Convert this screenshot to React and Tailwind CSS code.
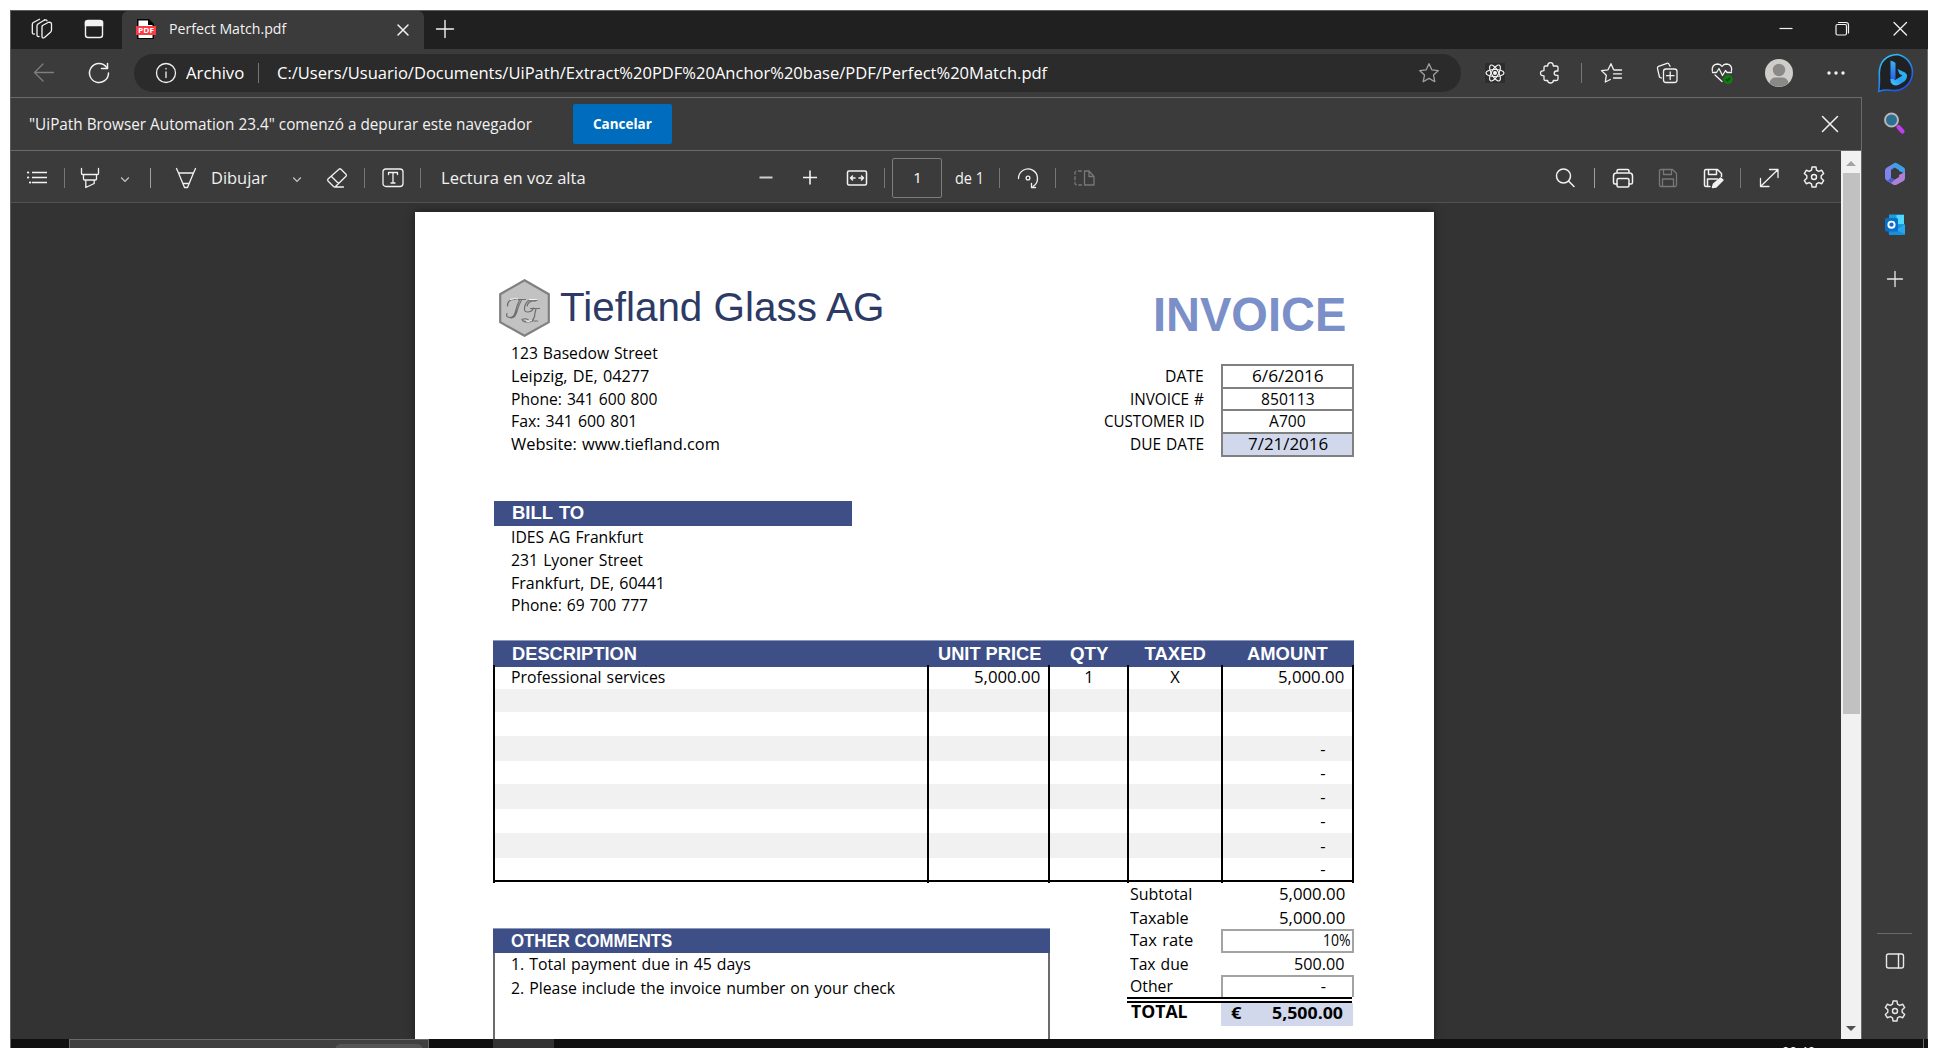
import React, { useLayoutEffect, useRef, useState } from "react";

/* Text scaled horizontally so that it occupies exactly `w` pixels. */
function Fit({ w, className = "", children }) {
  const ref = useRef(null);
  const [k, setK] = useState(1);
  useLayoutEffect(() => {
    setK(w / ref.current.offsetWidth);
  }, [w]);
  return (
    <span className={"block shrink-0 whitespace-nowrap " + className} style={{ width: w }}>
      <span ref={ref} className="inline-block origin-left" style={{ transform: `scaleX(${k})` }}>
        {children}
      </span>
    </span>
  );
}

function Ico({ className = "", children, sw = 1.3 }) {
  return (
    <svg
      viewBox="0 0 24 24"
      className={"h-6 w-6 shrink-0 " + className}
      fill="none"
      stroke="currentColor"
      strokeWidth={sw}
      strokeLinecap="round"
      strokeLinejoin="round"
    >
      {children}
    </svg>
  );
}

const Sep = ({ className = "" }) => <div className={"h-5 w-px shrink-0 bg-[#767676] " + className} />;

const Chevron = ({ className }) => (
  <svg viewBox="0 0 12 12" className={"h-3 w-3 shrink-0 " + className} fill="none" stroke="#c8c8c8" strokeWidth="1.2">
    <path d="M2.200 5.500 L6 9.500 L9.800 5.500" />
  </svg>
);

const Gear = ({ className }) => (
  <Ico className={className} sw={1.25}>
    <g transform="translate(12 12) scale(1.14) translate(-12 -11)">
      <path d="M10.300 2.200h3.400l.500 2.800 1.900 1.100 2.700-1 1.700 2.900-2.200 1.900v2.200l2.200 1.900-1.700 2.900-2.700-1-1.900 1.100-.500 2.800h-3.400l-.500-2.800-1.900-1.100-2.700 1-1.700-2.900 2.200-1.900V9.900l-2.200-1.900 1.700-2.900 2.700 1 1.900-1.100z" />
      <circle cx="12" cy="11" r="2.200" />
    </g>
  </Ico>
);

function TabStrip() {
  return (
    <div className="flex h-[38px] shrink-0 bg-[#202020] text-[#f2f2f2]">
      <Ico className="ml-[19px] mt-[6px]" sw={1.3}>
        <path d="M12.500 8.500L18.500 5.300Q21.500 5 21.500 7v6q0 1.500-1 2.200L14.500 20.500q-2.500 1.300-2.500-1V10q0-1 .500-1.500z" />
        <path d="M9 19.500q-2 .300-2-1.500V9q0-1.300 1-2l6.500-4" />
        <path d="M4.300 17q-2 .300-2-1.500V7.500q0-1.300 1-2L9.500 2.200M14.500 3q2-.500 2.500.800" />
      </Ico>
      <Ico className="ml-[28px] mt-[6px]" sw={1.4}>
        <rect x="3.500" y="3.500" width="17" height="17" rx="2.500" />
        <path d="M3.500 4.500h17v4h-17z" fill="currentColor" />
      </Ico>
      <div className="ml-[16px] flex h-[38px] w-[302px] rounded-t-[6px] bg-[#3b3b3b]">
        <svg viewBox="0 0 20 20" className="ml-[14px] mt-[8px] h-5 w-5 shrink-0">
          <path d="M1 0h12l5 5v15H1z" fill="#050505" />
          <path d="M2.500 1.500h9.500V6h4.500v13h-14z" fill="#fff" />
          <path d="M0 7h20v9H0z" fill="#fb3b41" />
          <text x="10" y="14" textAnchor="middle" fontSize="6.800" fontWeight="700" fill="#fff" fontFamily="Open Sans, sans-serif" textLength="16" lengthAdjust="spacingAndGlyphs">PDF</text>
        </svg>
        <Fit w={117} className="ml-[13px] text-[14.5px] leading-[36px]">Perfect Match.pdf</Fit>
        <Ico className="ml-[105px] mt-[7px]" sw={1.5}>
          <path d="M7 7l10 10M17 7L7 17" />
        </Ico>
      </div>
      <Ico className="ml-[9px] mt-[6px]" sw={1.4}>
        <path d="M12 3.500v17M3.500 12h17" />
      </Ico>
      <Ico className="ml-[1317px] mt-[6px]" sw={1.2}>
        <path d="M5.500 11.500h13" strokeLinecap="butt" />
      </Ico>
      <Ico className="ml-[32px] mt-[6px]" sw={1.2}>
        <rect x="6" y="7.500" width="10.500" height="10.500" rx="1.500" />
        <path d="M8.500 5.500H16q2.500 0 2.500 2.500v8" />
      </Ico>
      <Ico className="ml-[34px] mt-[6px]" sw={1.3}>
        <path d="M6 5.500l12.500 12.500M18.500 5.500L6 18" />
      </Ico>
    </div>
  );
}

function NavBar() {
  return (
    <div className="flex h-12 shrink-0 items-center bg-[#3b3b3b] text-[#f2f2f2]">
      <Ico className="ml-[21px] text-[#7e7e7e]">
        <path d="M21.500 11.500H2.500M11 3L2.500 11.500 11 20" />
      </Ico>
      <Ico className="ml-[31px]" sw={1.5}>
        <path d="M21.500 12A9.500 9.500 0 1 1 19.500 6.200" />
        <path d="M20.500 2.500v5h-6" />
      </Ico>
      <div className="ml-[23px] flex h-[38px] w-[1327px] shrink-0 items-center rounded-full bg-[#2b2b2b]">
        <Ico className="ml-[20px]">
          <circle cx="12" cy="12" r="9.500" />
          <path d="M12 11v5.500M12 7.500v.400" />
        </Ico>
        <Fit w={58} className="ml-[8px] text-[17px] leading-[36px] text-white">Archivo</Fit>
        <Sep className="ml-[14px] bg-[#8a8a8a]" />
        <Fit w={770} className="ml-[18px] text-[17px] leading-[36px] text-white">
          C:/Users/Usuario/Documents/UiPath/Extract%20PDF%20Anchor%20base/PDF/Perfect%20Match.pdf
        </Fit>
        <Ico className="ml-auto mr-[20px] text-[#a0a0a0]">
          <path d="M12 2.700l2.800 6.100 6.600.800-4.900 4.500 1.300 6.600L12 17.400l-5.800 3.300 1.300-6.600-4.900-4.500 6.600-.800z" />
        </Ico>
      </div>
      <Ico className="ml-[22px]" sw={1.2}>
        <rect x="2" y="2" width="20" height="20" fill="#2d2d2d" stroke="none" />
        <ellipse cx="12" cy="12" rx="9" ry="3.500" />
        <ellipse cx="12" cy="12" rx="9" ry="3.500" transform="rotate(60 12 12)" />
        <ellipse cx="12" cy="12" rx="9" ry="3.500" transform="rotate(120 12 12)" />
        <circle cx="12" cy="12" r="1.400" fill="currentColor" />
      </Ico>
      <Ico className="ml-[31px]">
        <path d="M7.500 5h2.200q0-3.300 2.800-3.300T15.300 5h3.200q1.500 0 1.500 1.500V10h-1.500q-2.300.200-2.300 2.200t2.300 2.200H20v3.600q0 1.500-1.500 1.500h-3.200q0 2.500-2.800 2.500t-2.800-2.500H7.500Q6 19.500 6 18v-3.200q-3.500 0-3.500-2.600T6 9.600V6.500Q6 5 7.500 5z" />
      </Ico>
      <Sep className="ml-[19px]" />
      <Ico className="ml-[17px]">
        <path d="M14.500 8.500L12 2.700 9 8.800l-6.500.800 4.800 4.700-1 6.700 5-2.500M15 9h7.500M14.500 12.800h8M14.500 17h8" />
      </Ico>
      <Ico className="ml-[32px]">
        <path d="M6.500 17l-2-.800-2-8.700Q2.200 5.800 3.500 5.300l8.500-3q1.500-.400 2 1l1 2" />
        <rect x="8.500" y="8" width="13.500" height="13.500" rx="2.500" />
        <path d="M15.200 11v7.500M11.500 14.700h7.500" />
      </Ico>
      <Ico className="ml-[31px]">
        <path d="M2.300 10Q1.500 3.500 7.500 3q3 0 4.500 2.500Q13.500 3 16.500 3q6 .500 5 7M5 14l7 6.500M2.500 11.500h4l2.500-4 3.500 7 3-5 1.500 2h4.500" />
        <circle cx="18" cy="18.500" r="4.700" fill="#107c10" stroke="none" />
        <path d="M16.300 18.500l1.200 1.300 2.200-2.500" stroke="#0b3d0b" />
      </Ico>
      <svg viewBox="0 0 28 28" className="ml-[31px] h-7 w-7 shrink-0">
        <circle cx="14" cy="14" r="14" fill="#cfcdca" />
        <circle cx="14" cy="11" r="6.200" fill="#8b8987" />
        <path d="M4.500 24q1-5.500 6.500-5.500h6q5.500 0 6.500 5.500A14 14 0 0 1 4.500 24z" fill="#8b8987" />
      </svg>
      <Ico className="ml-[31px]">
        <g fill="currentColor" stroke="none">
          <circle cx="5" cy="12" r="1.700" />
          <circle cx="12" cy="12" r="1.700" />
          <circle cx="19" cy="12" r="1.700" />
        </g>
      </Ico>
    </div>
  );
}

function InfoBar() {
  return (
    <div className="flex h-[54px] shrink-0 items-center border-y border-[#6a6a6a] bg-[#3b3b3b] text-[#f2f2f2]">
      <Fit w={503} className="-mt-px ml-[18px] text-[15.5px] leading-[44px]">"UiPath Browser Automation 23.4" comenzó a depurar este navegador</Fit>
      <div className="ml-[41px] flex h-10 w-[99px] items-center justify-center rounded-[2px] bg-[#006cbe] text-white">
        <Fit w={58.5} className="text-[14.5px] font-bold">Cancelar</Fit>
      </div>
      <Ico className="ml-auto mr-[19px]" sw={1.5}>
        <path d="M4.500 4.500l15 15M19.500 4.500l-15 15" />
      </Ico>
    </div>
  );
}

function PdfToolbar() {
  return (
    <div className="flex h-[52px] shrink-0 items-center border-b border-[#525252] bg-[#3b3b3b] pt-[2px] text-[#f2f2f2]">
      <Ico className="ml-[14px]">
        <path d="M7 6.500h15M7 11.500h15M7 16.500h15" strokeLinecap="butt" />
        <path d="M3 6.500h.200M3 11.500h.200M5 16.500h.200" strokeWidth="2.200" />
      </Ico>
      <Sep className="ml-[15px]" />
      <Ico className="ml-[13px]">
        <path d="M3.500 2.500v5q0 1 1 1h15q1 0 1-1v-5M5.500 8.500v4.500q0 1 1 1h11q1 0 1-1V8.500M7.800 14v7.500l8.400-4V14" />
      </Ico>
      <Chevron className="ml-[17px]" />
      <Sep className="ml-[19px] bg-[#a0a0a0]" />
      <Ico className="ml-[23px]">
        <path d="M2.500 2.500L4.500 7h15l2-4.500M4.500 7l6 14.500h3L19.500 7M9 17.500h6" />
      </Ico>
      <Fit w={56} className="ml-[13px] text-[17px] leading-[50px]">Dibujar</Fit>
      <Chevron className="ml-[24px]" />
      <Ico className="ml-[22px]">
        <path d="M14 3.200q1-.900 2 0l5 5q.900 1 0 2L10.500 20.500q-1 .800-2 0l-5.500-5.500q-.800-1 0-2zM6.500 10.500l7 7M9.500 21h9" />
      </Ico>
      <Sep className="ml-[15px]" />
      <Ico className="ml-[16px]">
        <rect x="2" y="3" width="20" height="17.500" rx="3" />
        <path d="M7.500 8.500V6.500h9v2M12 6.500V17M10 17h4" />
      </Ico>
      <Sep className="ml-[15px]" />
      <Fit w={145} className="ml-[20px] text-[17px] leading-[50px]">Lectura en voz alta</Fit>
      <Ico className="ml-[168px] text-[#d0d0d0]" sw={2}>
        <path d="M5.500 11.500h13" strokeLinecap="butt" />
      </Ico>
      <Ico className="ml-[20px]" sw={1.6}>
        <path d="M5 11.500h14M12 4.500v14" strokeLinecap="butt" />
      </Ico>
      <Ico className="ml-[23px]" sw={1.5}>
        <rect x="2.500" y="5" width="19" height="14" rx="1.500" />
        <path d="M5.500 12h4.500M7.500 10l-2 2 2 2M18.500 12H14M16.500 10l2 2-2 2" />
      </Ico>
      <Sep className="ml-[15px]" />
      <div className="ml-[7px] flex h-10 w-[50px] shrink-0 items-center justify-center rounded-[2px] border border-[#7d7d7d] pl-px text-[15px] text-white">1</div>
      <Fit w={29} className="ml-[13px] text-[15.5px] leading-[50px]">de 1</Fit>
      <Sep className="ml-[15px]" />
      <Ico className="ml-[16px]">
        <path d="M2.500 12.500a9.500 9.500 0 1 1 14.500 8" />
        <path d="M19.500 21.500h-4v-4" />
        <circle cx="12" cy="12" r="1.900" />
      </Ico>
      <Sep className="ml-[15px]" />
      <Ico className="ml-[16px] text-[#787878]">
        <path d="M12.500 5h4.500l5 5.500V19h-9.500zM17 5v5.500h5" />
        <path d="M9.500 5H5Q3 5 3 7v10q0 2 2 2h4.500" strokeDasharray="3 2.500" />
      </Ico>
      <Ico className="ml-[457px]" sw={1.5}>
        <circle cx="10.500" cy="10" r="7" />
        <path d="M15.500 15l5.500 5.500" />
      </Ico>
      <Sep className="ml-[17px] bg-[#a0a0a0]" />
      <Ico className="ml-[16px]" sw={1.5}>
        <path d="M6 7V5q0-1.500 1.500-1.500h9Q18 3.500 18 5v2M6 18H4q-1.500 0-1.500-1.500V10Q2.500 7 5.500 7h13q3 0 3 3v6.500Q21.500 18 20 18h-2" />
        <rect x="6" y="12.500" width="12" height="8.500" rx="1.500" />
      </Ico>
      <Ico className="ml-[21px] text-[#787878]">
        <path d="M5 3.500h11.500l4 4V19q0 1.500-1.500 1.500H5q-1.500 0-1.500-1.500V5Q3.500 3.500 5 3.500zM7.500 3.500v5h8v-5M6.500 20.500v-7.500h11v7.500" />
      </Ico>
      <Ico className="ml-[21px]" sw={1.5}>
        <path d="M9 20.500H5q-1.500 0-1.500-1.500V5Q3.500 3.500 5 3.500h11.500l4 4v3M7.500 3.500v5h8v-5M6.500 20.500v-7.500h10" />
        <path d="M11.500 21.500l1-3.500 7-6 2.500 2-7 7z" fill="currentColor" />
      </Ico>
      <Sep className="ml-[15px]" />
      <Ico className="ml-[16px]">
        <path d="M3.500 20.500L21 3.500M12.500 3.500H21v8M3.500 12.500v8H12" />
      </Ico>
      <Gear className="-mt-[2px] ml-[21px]" />
    </div>
  );
}

function Sidebar() {
  return (
    <div className="flex w-[66px] shrink-0 flex-col items-center border-r border-[#6a6a6a] bg-[#3b3b3b] text-[#e8e8e8]">
      <svg viewBox="0 0 40 40" className="ml-[4px] mt-[4px] h-10 w-10 shrink-0">
        <defs>
          <linearGradient id="ring" x1="0" y1="0" x2="0.6" y2="1">
            <stop offset="0" stopColor="#35d0f5" />
            <stop offset="1" stopColor="#1b55e8" />
          </linearGradient>
          <linearGradient id="stem" x1="0" y1="0" x2="0" y2="1">
            <stop offset="0" stopColor="#3bb4f8" />
            <stop offset="1" stopColor="#1f4fe8" />
          </linearGradient>
          <linearGradient id="bowl" x1="1" y1="0" x2="0" y2="1">
            <stop offset="0" stopColor="#27c4f5" />
            <stop offset="0.55" stopColor="#2aa0f0" />
            <stop offset="1" stopColor="#4bc8ff" />
          </linearGradient>
        </defs>
        <path d="M20.500 1.500A18 18 0 1 1 14 37.300Q7 36.500 1.700 38.500q1-7 .600-18.500Q3 2.500 20.500 1.500z" fill="#202124" stroke="url(#ring)" strokeWidth="1.600" />
        <path d="M13.500 7.500q4 1 5 2.500v16l-5 4z" fill="url(#stem)" />
        <path d="M13.500 26q0 6.500 5.500 6.500 2 0 5-2l3.500-2.300q5-5.200.500-8.700L20.500 16l2 5 3 1.500L18 27q-1 .500-1-1z" fill="url(#bowl)" />
      </svg>
      <Ico className="ml-[-1px] mt-[18px]">
        <path d="M16.500 16l4 4.500" stroke="#c13df5" strokeWidth="4.200" />
        <circle cx="9.500" cy="9" r="6.500" fill="#2b6f94" stroke="#b9b6b3" strokeWidth="2" />
      </Ico>
      <svg viewBox="0 0 24 24" className="ml-[1px] mt-[27px] h-6 w-6 shrink-0">
        <path d="M11.500 1L4 5.500Q2 6.500 2 8.500v7q0 2 1.500 3L8 20.500V8.500q0-2 1.500-3l5-3z" fill="#7d84ec" />
        <path d="M11.500 1q1-.500 2.500.200l6.500 4Q22 6 22 8v3.500L16 9V8l-4.500-2.500L8 8l1-4.500z" fill="#3f9fe8" />
        <path d="M22 10v6q0 2-1.500 3l-6.500 3.500q-2 1-4 0L4 19l2-1 6-.500L16 15v-2z" fill="#b07fd8" />
        <path d="M8 8v7.500l4 2.300-4 3.200-4.500-2.500Q7 18 8 15z" fill="#4b5fc8" />
        <path d="M12 7.700l3.700 2.200v4.200L12 16.300l-3.700-2.200V9.900z" fill="#3b3b3b" />
      </svg>
      <svg viewBox="0 0 24 24" className="ml-[1px] mt-[27px] h-6 w-6 shrink-0">
        <path d="M6 1.500h15V16H6z" fill="#1b9de2" />
        <path d="M13.500 2h7.500v9h-7.500z" fill="#50d9ff" />
        <path d="M5 13l17-1v9q0 1-1 1H6z" fill="#1490df" />
        <path d="M13 17l9-6v10z" fill="#28a8ea" />
        <rect x="2" y="5" width="13" height="13.500" rx="1.500" fill="#0a6fc8" />
        <circle cx="8.500" cy="11.700" r="3.100" fill="none" stroke="#fff" strokeWidth="1.900" />
      </svg>
      <Ico className="mt-[30px]">
        <path d="M12 4.500v15M4.500 12h15" />
      </Ico>
      <div className="mt-auto h-px w-[35px] bg-[#6a6a6a]" />
      <Ico className="mt-[15px]" sw={1.4}>
        <rect x="3.500" y="5" width="17" height="14" rx="2" />
        <path d="M15.500 5v14" />
      </Ico>
      <Gear className="mb-[16px] mt-[26px]" />
    </div>
  );
}

function Scrollbar() {
  return (
    <div className="flex w-5 shrink-0 flex-col items-center bg-[#f1f1f1]">
      <div className="mt-[10px] h-0 w-0 border-x-[5px] border-b-[5px] border-x-transparent border-b-[#a3a3a3]" />
      <div className="mt-[7px] h-[541px] w-[17px] bg-[#c1c1c1]" />
      <div className="mb-[8px] mt-auto h-0 w-0 border-x-[5px] border-t-[5px] border-x-transparent border-t-[#505050]" />
    </div>
  );
}

const address = [
  ["123 Basedow Street", 147],
  ["Leipzig, DE, 04277", 138],
  ["Phone: 341 600 800", 146],
  ["Fax: 341 600 801", 126],
  ["Website: www.tiefland.com", 209],
];

const meta = [
  ["DATE", 39, "6/6/2016", 72],
  ["INVOICE #", 74, "850113", 54],
  ["CUSTOMER ID", 100, "A700", 37],
  ["DUE DATE", 74, "7/21/2016", 80],
];

const billTo = [
  ["IDES AG Frankfurt", 132],
  ["231 Lyoner Street", 132],
  ["Frankfurt, DE, 60441", 154],
  ["Phone: 69 700 777", 137],
];

const rows = [
  "h-[22px] bg-white",
  "h-[23px] bg-[#f1f1f1]",
  "h-[24px] bg-white",
  "h-[25px] bg-[#f1f1f1]",
  "h-[23px] bg-white",
  "h-[25px] bg-[#f1f1f1]",
  "h-[24px] bg-white",
  "h-[25px] bg-[#f1f1f1]",
  "h-[22px] bg-white",
];

function Row({ className, cells = [] }) {
  return (
    <div className={"grid grid-cols-[434px_121px_79px_94px_133px] " + className}>
      <div className="flex items-center border-l-2 border-black pl-[16px]">{cells[0]}</div>
      <div className="flex items-center justify-end border-l-2 border-black pr-[8px]">{cells[1]}</div>
      <div className="flex items-center justify-center border-l-2 border-black">{cells[2]}</div>
      <div className="flex items-center justify-center border-l-2 border-black">{cells[3]}</div>
      <div className="flex items-center justify-end border-x-2 border-black pr-[8px]">{cells[4]}</div>
    </div>
  );
}

const Dash = () => <span className="mr-[18px] leading-[20px]">-</span>;

function Invoice() {
  return (
    <div className="ml-[404px] mt-[9px] flex h-[827px] w-[1019px] shrink-0 flex-col bg-white font-['Open_Sans','Noto_Sans',sans-serif] text-[16.5px] text-black shadow-[0_0_8px_rgba(0,0,0,0.5)] [word-spacing:1px]">
      <div className="flex h-[289px] shrink-0">
        <div className="ml-[84px] mt-[67px] w-[600px]">
          <div className="flex h-[58px] items-center">
            <svg viewBox="0 0 51 58" className="h-[58px] w-[51px] shrink-0">
              <path d="M25.500 1.300L49.800 15.200v28L25.500 56.800 1.200 43.200v-28z" fill="#c2c2c2" stroke="#808080" strokeWidth="2.200" />
              <g fill="none" stroke="#6e6e6e" strokeWidth="1.200" strokeLinecap="round">
                <path d="M8.500 27q0-6.500 7-6.500h11M20.500 21q-2.500 5-4 11.500-1.500 6.500-6 6-4-.500-2.500-4M22.500 21q-3 5-4.500 11-1.500 6.500-6 7" />
                <path d="M38 21.500q-9-3-12 5-2 6.500 2.500 6.500t6-4M31.500 29.500h9M37 29.500q-1 4-1.500 8-1.500 5.500-6.500 5.500t-6-2.500q3-1.500 6 0M34 42h4.500M36.500 22q-7-1-8.500 5" />
              </g>
              <path d="M11 20.500q5-1.500 8-.500M30 20.500h8M27 42q3 1.500 6-1" stroke="#f4f4f4" strokeWidth="1" fill="none" />
            </svg>
            <Fit w={324.5} className="-mt-[2px] ml-[10px] font-['Liberation_Sans',Arial,sans-serif] text-[40.5px] leading-[56px] text-[#2d3a66] [word-spacing:0px]">Tiefland Glass AG</Fit>
          </div>
          <div className="ml-[12px] mt-[5px]">
            {address.map(([t, w]) => (
              <Fit key={t} w={w} className="h-[22.75px] leading-[22.6px]">{t}</Fit>
            ))}
          </div>
        </div>
        <div className="flex w-[255px] flex-col items-end pt-[76px]">
          <Fit w={193} className="mr-[8px] font-['Liberation_Sans',Arial,sans-serif] text-[47.5px] font-bold leading-[54px] text-[#7b8fc8]">INVOICE</Fit>
          <div className="mt-[22px] flex">
            <div className="mr-[17px] flex flex-col items-end">
              {meta.map(([t, w]) => (
                <Fit key={t} w={w} className="h-[22.6px] leading-[23px]">{t}</Fit>
              ))}
            </div>
            <div className="w-[133px] border-x-2 border-t-2 border-[#808080]">
              {meta.map(([, , t, w]) => (
                <div key={t} className={"flex h-[22.7px] justify-center border-b-2 border-[#808080] " + (t === "7/21/2016" ? "bg-[#d2d8ec]" : "bg-white")}>
                  <Fit w={w} className="h-[20px] leading-[19px]">{t}</Fit>
                </div>
              ))}
            </div>
          </div>
        </div>
      </div>

      <div className="ml-[79px] flex h-[25px] w-[358px] shrink-0 items-center bg-[#3e4f87] font-['Liberation_Sans',Arial,sans-serif] text-[18.5px] font-bold leading-[25px] text-white">
        <Fit w={72} className="-mt-[2px] ml-[18px]">BILL TO</Fit>
      </div>
      <div className="ml-[95.5px] h-[114px] shrink-0 pt-px">
        {billTo.map(([t, w]) => (
          <Fit key={t} w={w} className="h-[22.8px] leading-[20px]">{t}</Fit>
        ))}
      </div>

      <div className="ml-[77.5px] shrink-0">
        <div className="grid h-[25px] w-[861px] grid-cols-[434px_121px_79px_94px_133px] items-center border-t border-[#8d98bb] bg-[#3e4f87] font-['Liberation_Sans',Arial,sans-serif] text-[18.5px] font-bold leading-[25px] text-white [word-spacing:0px]">
          <Fit w={124.5} className="ml-[19px]">DESCRIPTION</Fit>
          <Fit w={103.5} className="ml-[11px]">UNIT PRICE</Fit>
          <Fit w={38.5} className="ml-[22.5px]">QTY</Fit>
          <Fit w={61} className="ml-[18px]">TAXED</Fit>
          <Fit w={80.5} className="ml-[26.5px]">AMOUNT</Fit>
        </div>
        <Row className="h-[2px] w-[861px] bg-[#3e4f87]" />
        {rows.map((c, i) => (
          <Row
            key={i}
            className={"w-[861px] leading-[22px] " + c}
            cells={
              i === 0
                ? [
                    <Fit w={154} className="-mt-[2px]">Professional services</Fit>,
                    <Fit w={66} className="-mt-[2px]">5,000.00</Fit>,
                    <span className="-mt-[2px] pl-[2px]">1</span>,
                    <span className="-mt-[2px] pl-px">X</span>,
                    <Fit w={66} className="-mt-[2px]">5,000.00</Fit>,
                  ]
                : i > 2
                ? [null, null, null, null, <Dash />]
                : []
            }
          />
        ))}
        <div className="h-[2px] w-[861px] bg-black" />
        <Row className="h-px w-[861px]" />
      </div>

      <div className="ml-[77.5px] flex h-[156px] shrink-0">
        <div className="mt-[45px] flex w-[557.5px] shrink-0 flex-col">
          <div className="flex h-[25px] shrink-0 items-center border-t border-[#8d98bb] bg-[#3e4f87] font-['Liberation_Sans',Arial,sans-serif] text-[18.5px] font-bold leading-[24px] text-white [word-spacing:0px]">
            <Fit w={161.5} className="-mt-px ml-[18.5px]">OTHER COMMENTS</Fit>
          </div>
          <div className="h-[86px] border-x-2 border-[#6b6b6b] pl-[16.5px]">
            <Fit w={240} className="h-[24px] leading-[22px]">1. Total payment due in 45 days</Fit>
            <Fit w={384} className="h-[24px] leading-[22px]">2. Please include the invoice number on your check</Fit>
          </div>
        </div>
        <div className="ml-[77px] w-[227px] shrink-0 leading-[20px]">
          <div className="flex h-[21px] items-center">
            <Fit w={62} className="ml-[3px]">Subtotal</Fit>
            <Fit w={66} className="ml-auto mr-[9.5px]">5,000.00</Fit>
          </div>
          <div className="flex h-[25px] items-center pt-[2px]">
            <Fit w={59} className="ml-[3px]">Taxable</Fit>
            <Fit w={66} className="ml-auto mr-[9.5px]">5,000.00</Fit>
          </div>
          <div className="flex h-[24px]">
            <Fit w={63} className="ml-[3px] mt-px">Tax rate</Fit>
            <div className="ml-auto flex h-[24px] w-[133px] justify-end border-2 border-[#a3a3a3] pr-[1px]">
              <Fit w={28} className="-mt-px">10%</Fit>
            </div>
          </div>
          <div className="flex h-[22px] items-center">
            <Fit w={59} className="ml-[3px]">Tax due</Fit>
            <Fit w={51} className="ml-auto mr-[9.5px]">500.00</Fit>
          </div>
          <div className="flex h-[22px] items-center">
            <Fit w={43} className="ml-[3px]">Other</Fit>
            <div className="ml-auto flex h-full w-[133px] items-center justify-end border-x-2 border-t-2 border-[#a3a3a3]">
              <span className="-mt-[2px] mr-[26px] leading-[20px]">-</span>
            </div>
          </div>
          <div className="h-[6px] w-[225px] border-y-2 border-black" />
          <div className="flex h-[23px] font-bold">
            <Fit w={57} className="ml-[4px] -mt-px text-[17px]">TOTAL</Fit>
            <div className="ml-auto mr-px flex h-[23px] w-[132px] justify-between bg-[#d2d8ec] pl-[10px] pr-[10px]">
              <Fit w={10}>€</Fit>
              <Fit w={71}>5,500.00</Fit>
            </div>
          </div>
        </div>
      </div>
    </div>
  );
}

function Taskbar() {
  return (
    <div className="flex h-[9px] w-[1918px] shrink-0 overflow-hidden border-l border-[#6a6a6a] bg-[#101010]">
      <div className="ml-[58px] flex h-[9px] w-[360px] border-x border-t border-[#6a6a6a] bg-[#404040]">
        <div className="ml-[265px] mt-[4px] h-[10px] w-[88px] rounded-t-[6px] bg-[#555]" />
      </div>
      <div className="ml-[64px] h-[9px] w-[61px] bg-[#333]" />
      <Fit w={33} className="ml-[1228px] mt-[4px] text-[13px] leading-[17px] text-white">00:40</Fit>
      <div className="ml-auto mr-[4px] h-[9px] w-px bg-[#6a6a6a]" />
    </div>
  );
}

export default function App() {
  return (
    <div className="h-[1048px] w-[1938px] overflow-hidden bg-white pl-[10px] pt-[10px] font-['Open_Sans','Noto_Sans',sans-serif]">
      <div className="flex h-[1029px] w-[1918px] flex-col border-l border-t border-[#5c5f5f]">
        <TabStrip />
        <div className="flex h-[990px]">
          <div className="flex w-[1851px] shrink-0 flex-col">
            <NavBar />
            <div className="flex h-[942px] flex-col border-r border-[#6a6a6a]">
              <InfoBar />
              <div className="flex h-[888px]">
                <div className="flex w-[1830px] shrink-0 flex-col overflow-hidden bg-[#333333]">
                  <PdfToolbar />
                  <Invoice />
                </div>
                <Scrollbar />
              </div>
            </div>
          </div>
          <Sidebar />
        </div>
      </div>
      <Taskbar />
    </div>
  );
}
